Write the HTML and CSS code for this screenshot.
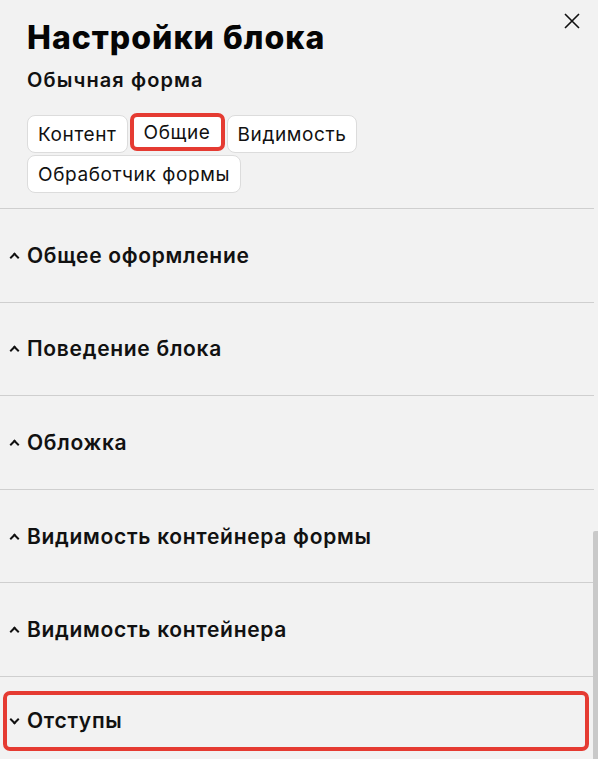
FILE: index.html
```
<!DOCTYPE html>
<html lang="ru">
<head>
<meta charset="utf-8">
<link rel="stylesheet" href="styles.css">
</head>
<body>
<div class="panel">
  <header class="head">
    <h1 class="title">Настройки блока</h1>
    <div class="subtitle">Обычная форма</div>
    <div class="tabs">
      <span class="tab">Контент</span>
      <span class="tab tab-active">Общие</span>
      <span class="tab">Видимость</span>
      <span class="tab">Обработчик формы</span>
    </div>
    <button class="close" aria-label="close">
      <svg width="16" height="16" viewBox="0 0 16 16"><path d="M1 1L15 15M15 1L1 15" stroke="#111" stroke-width="1.6" fill="none"/></svg>
    </button>
  </header>
  <div class="sections">
    <div class="row"><span class="chev up"></span><span class="label">Общее оформление</span></div>
    <div class="row"><span class="chev up"></span><span class="label">Поведение блока</span></div>
    <div class="row"><span class="chev up"></span><span class="label">Обложка</span></div>
    <div class="row"><span class="chev up"></span><span class="label">Видимость контейнера формы</span></div>
    <div class="row"><span class="chev up"></span><span class="label">Видимость контейнера</span></div>
    <div class="row row-last">
      <div class="highlight"><span class="chev down"></span><span class="label">Отступы</span></div>
    </div>
  </div>
  <div class="scrollbar"></div>
</div>
</body>
</html>
```
FILE: styles.css
```
* { box-sizing: border-box; }
html, body { margin: 0; padding: 0; }
body {
  background: #f2f2f2;
  font-family: Inter, "Noto Sans", sans-serif;
  color: #111;
  width: 598px;
  height: 759px;
  overflow: hidden;
}
.panel { position: relative; height: 759px; }
.head { position: relative; padding: 19px 0 15px 27px; }
.title {
  margin: 0;
  font-size: 32px;
  line-height: 38px;
  font-weight: 800;
  letter-spacing: 1px;
  color: #050505;
}
.subtitle {
  margin-top: 11px;
  font-size: 20px;
  line-height: 24px;
  font-weight: 600;
  letter-spacing: 1.1px;
}
.tabs {
  display: flex;
  flex-wrap: wrap;
  gap: 2px 2px;
  margin-top: 23px;
  width: 345px;
}
.tab {
  display: inline-flex;
  align-items: center;
  height: 38px;
  padding: 0 10px;
  background: #fff;
  border: 1px solid #dcdcdc;
  border-radius: 8px;
  font-size: 19px;
  font-weight: 400;
  letter-spacing: 0.6px;
}
.tab-active {
  border: 4px solid #e53b32;
  border-radius: 7px;
  padding: 0 10px;
  height: 38px;
  margin-top: -2px;
  margin-bottom: 2px;
}
.close {
  position: absolute;
  top: 13px;
  right: 18px;
  background: none;
  border: 0;
  padding: 0;
  width: 16px;
  height: 16px;
}
.sections { border-top: 1px solid #cfcfcf; width: 594px; }
.row {
  display: flex;
  align-items: center;
  height: 93.6px;
  border-bottom: 1px solid #cfcfcf;
  padding-left: 11px;
}
.row-last { border-bottom: 0; padding: 14px 5px 0 3px; align-items: flex-start; }
.highlight {
  display: flex;
  align-items: center;
  width: 586px;
  height: 60px;
  border: 4px solid #e53b32;
  border-radius: 7px;
  padding-left: 4px;
}
.label {
  font-size: 21px;
  font-weight: 600;
  margin-left: 9px;
  letter-spacing: 0.7px;
}
.chev {
  display: inline-block;
  width: 7px;
  height: 7px;
  border-left: 2px solid #111;
  border-top: 2px solid #111;
  transform: rotate(45deg);
}
.chev.up { margin-top: 4px; }
.chev.down { transform: rotate(225deg); margin-top: -3px; }
.scrollbar {
  position: absolute;
  right: 0;
  top: 531px;
  bottom: 0;
  width: 5px;
  background: #c9c9c9;
  border-radius: 2px 0 0 0;
}
```
